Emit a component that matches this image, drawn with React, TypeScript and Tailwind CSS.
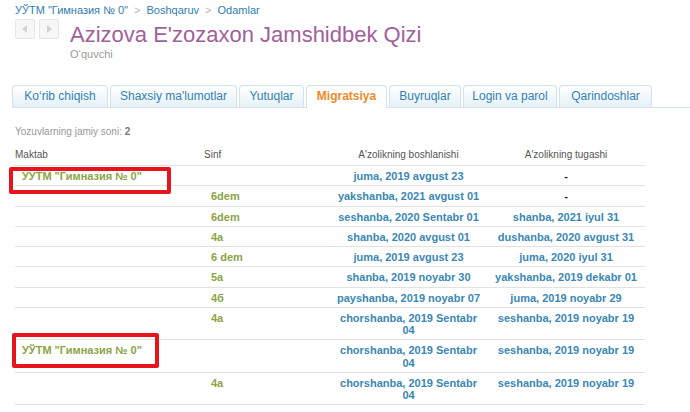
import React from "react";

type Row = { school?: string; cls?: string; start: string; end: string };

const rows: Row[] = [
  { school: "УУТМ \"Гимназия № 0\"", start: "juma, 2019 avgust 23", end: "-" },
  { cls: "6dem", start: "yakshanba, 2021 avgust 01", end: "-" },
  { cls: "6dem", start: "seshanba, 2020 Sentabr 01", end: "shanba, 2021 iyul 31" },
  { cls: "4a", start: "shanba, 2020 avgust 01", end: "dushanba, 2020 avgust 31" },
  { cls: "6 dem", start: "juma, 2019 avgust 23", end: "juma, 2020 iyul 31" },
  { cls: "5a", start: "shanba, 2019 noyabr 30", end: "yakshanba, 2019 dekabr 01" },
  { cls: "4б", start: "payshanba, 2019 noyabr 07", end: "juma, 2019 noyabr 29" },
  { cls: "4a", start: "chorshanba, 2019 Sentabr 04", end: "seshanba, 2019 noyabr 19" },
  { school: "УЎТМ \"Гимназия № 0\"", start: "chorshanba, 2019 Sentabr 04", end: "seshanba, 2019 noyabr 19" },
  { cls: "4a", start: "chorshanba, 2019 Sentabr 04", end: "seshanba, 2019 noyabr 19" },
];

const tabs = [
  { label: "Ko‘rib chiqish", w: "w-[96px]" },
  { label: "Shaxsiy ma'lumotlar", w: "w-[127px]" },
  { label: "Yutuqlar", w: "w-[65px]" },
  { label: "Migratsiya", w: "w-[81px]", active: true },
  { label: "Buyruqlar", w: "w-[72px]" },
  { label: "Login va parol", w: "w-[94px]" },
  { label: "Qarindoshlar", w: "w-[93px]" },
];

function NavBtn({ dir }: { dir: "l" | "r" }) {
  return (
    <div className="w-[20px] h-[20px] border border-[#e6e6e6] bg-[#f7f7f7] rounded-[2px] flex items-center justify-center">
      <svg width="8" height="10" viewBox="0 0 8 10">
        {dir === "l" ? (
          <polygon points="6,1 6,9 1,5" fill="#d2d2d2" />
        ) : (
          <polygon points="2,1 2,9 7,5" fill="#d2d2d2" />
        )}
      </svg>
    </div>
  );
}

export default function App() {
  return (
    <div
      className="relative w-[690px] h-[412px] overflow-hidden bg-white px-[15px] pt-[4px]"
      style={{ fontFamily: '"Liberation Sans", Arial, sans-serif' }}
    >
      <div className="text-[11px] leading-[13px] flex gap-[6px]">
        <span className="text-[#2f7cb0]">УЎТМ "Гимназия № 0"</span>
        <span className="text-[#b5b5b5]">&gt;</span>
        <span className="text-[#2f7cb0]">Boshqaruv</span>
        <span className="text-[#b5b5b5]">&gt;</span>
        <span className="text-[#2f7cb0]">Odamlar</span>
      </div>

      <div className="flex mt-[2px]">
        <div className="flex gap-[4px]">
          <NavBtn dir="l" />
          <NavBtn dir="r" />
        </div>
        <div className="ml-[11px]">
          <div className="mt-[3px] text-[22px] leading-[26px] text-[#a2609a]">
            Azizova E'zozaxon Jamshidbek Qizi
          </div>
          <div className="text-[11px] leading-[13px] text-[#9a9a9a]">O‘quvchi</div>
        </div>
      </div>

      <div className="mt-[24px] -ml-[3px] -mr-[15px] flex gap-[2px] items-end border-b border-[#d6e4ec]">
        {tabs.map((t) => (
          <div
            key={t.label}
            className={
              t.active
                ? `${t.w} h-[23px] -mb-[1px] border border-b-0 border-[#d2e2ec] rounded-t-[4px] bg-white text-center text-[12px] leading-[21px] font-bold text-[#f08a2a]`
                : `${t.w} h-[22px] border border-b-0 border-[#d2e2ec] rounded-t-[4px] bg-gradient-to-b from-white to-[#e4f1f7] text-center text-[12px] leading-[21px] text-[#3481b2]`
            }
          >
            {t.label}
          </div>
        ))}
      </div>

      <div className="mt-[17px] text-[10px] leading-[13px] text-[#999]">
        Yozuvlarning jamiy soni: <span className="font-bold text-[#777]">2</span>
      </div>

      <div className="w-[630px] mt-[11px]">
        <div className="grid grid-cols-[189px_126px_157px_158px] border-b border-[#e2e2e2] text-[10px] leading-[12px] text-[#555] pb-[4px]">
          <div>Maktab</div>
          <div>Sinf</div>
          <div className="text-center">A'zolikning boshlanishi</div>
          <div className="text-center">A'zolikning tugashi</div>
        </div>
        {rows.map((r, i) => (
          <div
            key={i}
            className="grid grid-cols-[189px_126px_157px_158px] border-b border-[#e2e2e2] text-[11px] leading-[12.25px] font-bold pt-[4px] pb-[3px]"
          >
            <div className="pl-[7px] text-[#8ba446]">{r.school ?? ""}</div>
            <div className="pl-[7px] text-[#8ba446]">{r.cls ?? ""}</div>
            <div className="px-[5px] text-center text-[#3a87b5]">{r.start}</div>
            <div className={r.end === "-" ? "px-[5px] text-center text-[#222]" : "px-[5px] text-center text-[#3a87b5]"}>
              {r.end}
            </div>
          </div>
        ))}
      </div>

      <div className="absolute left-[9px] top-[167px] w-[162px] h-[27px] border-[4px] border-[#e8141c] rounded-[2px]" />
      <div className="absolute left-[12px] top-[333px] w-[147px] h-[35px] border-[4px] border-[#e8141c] rounded-[2px]" />
    </div>
  );
}
